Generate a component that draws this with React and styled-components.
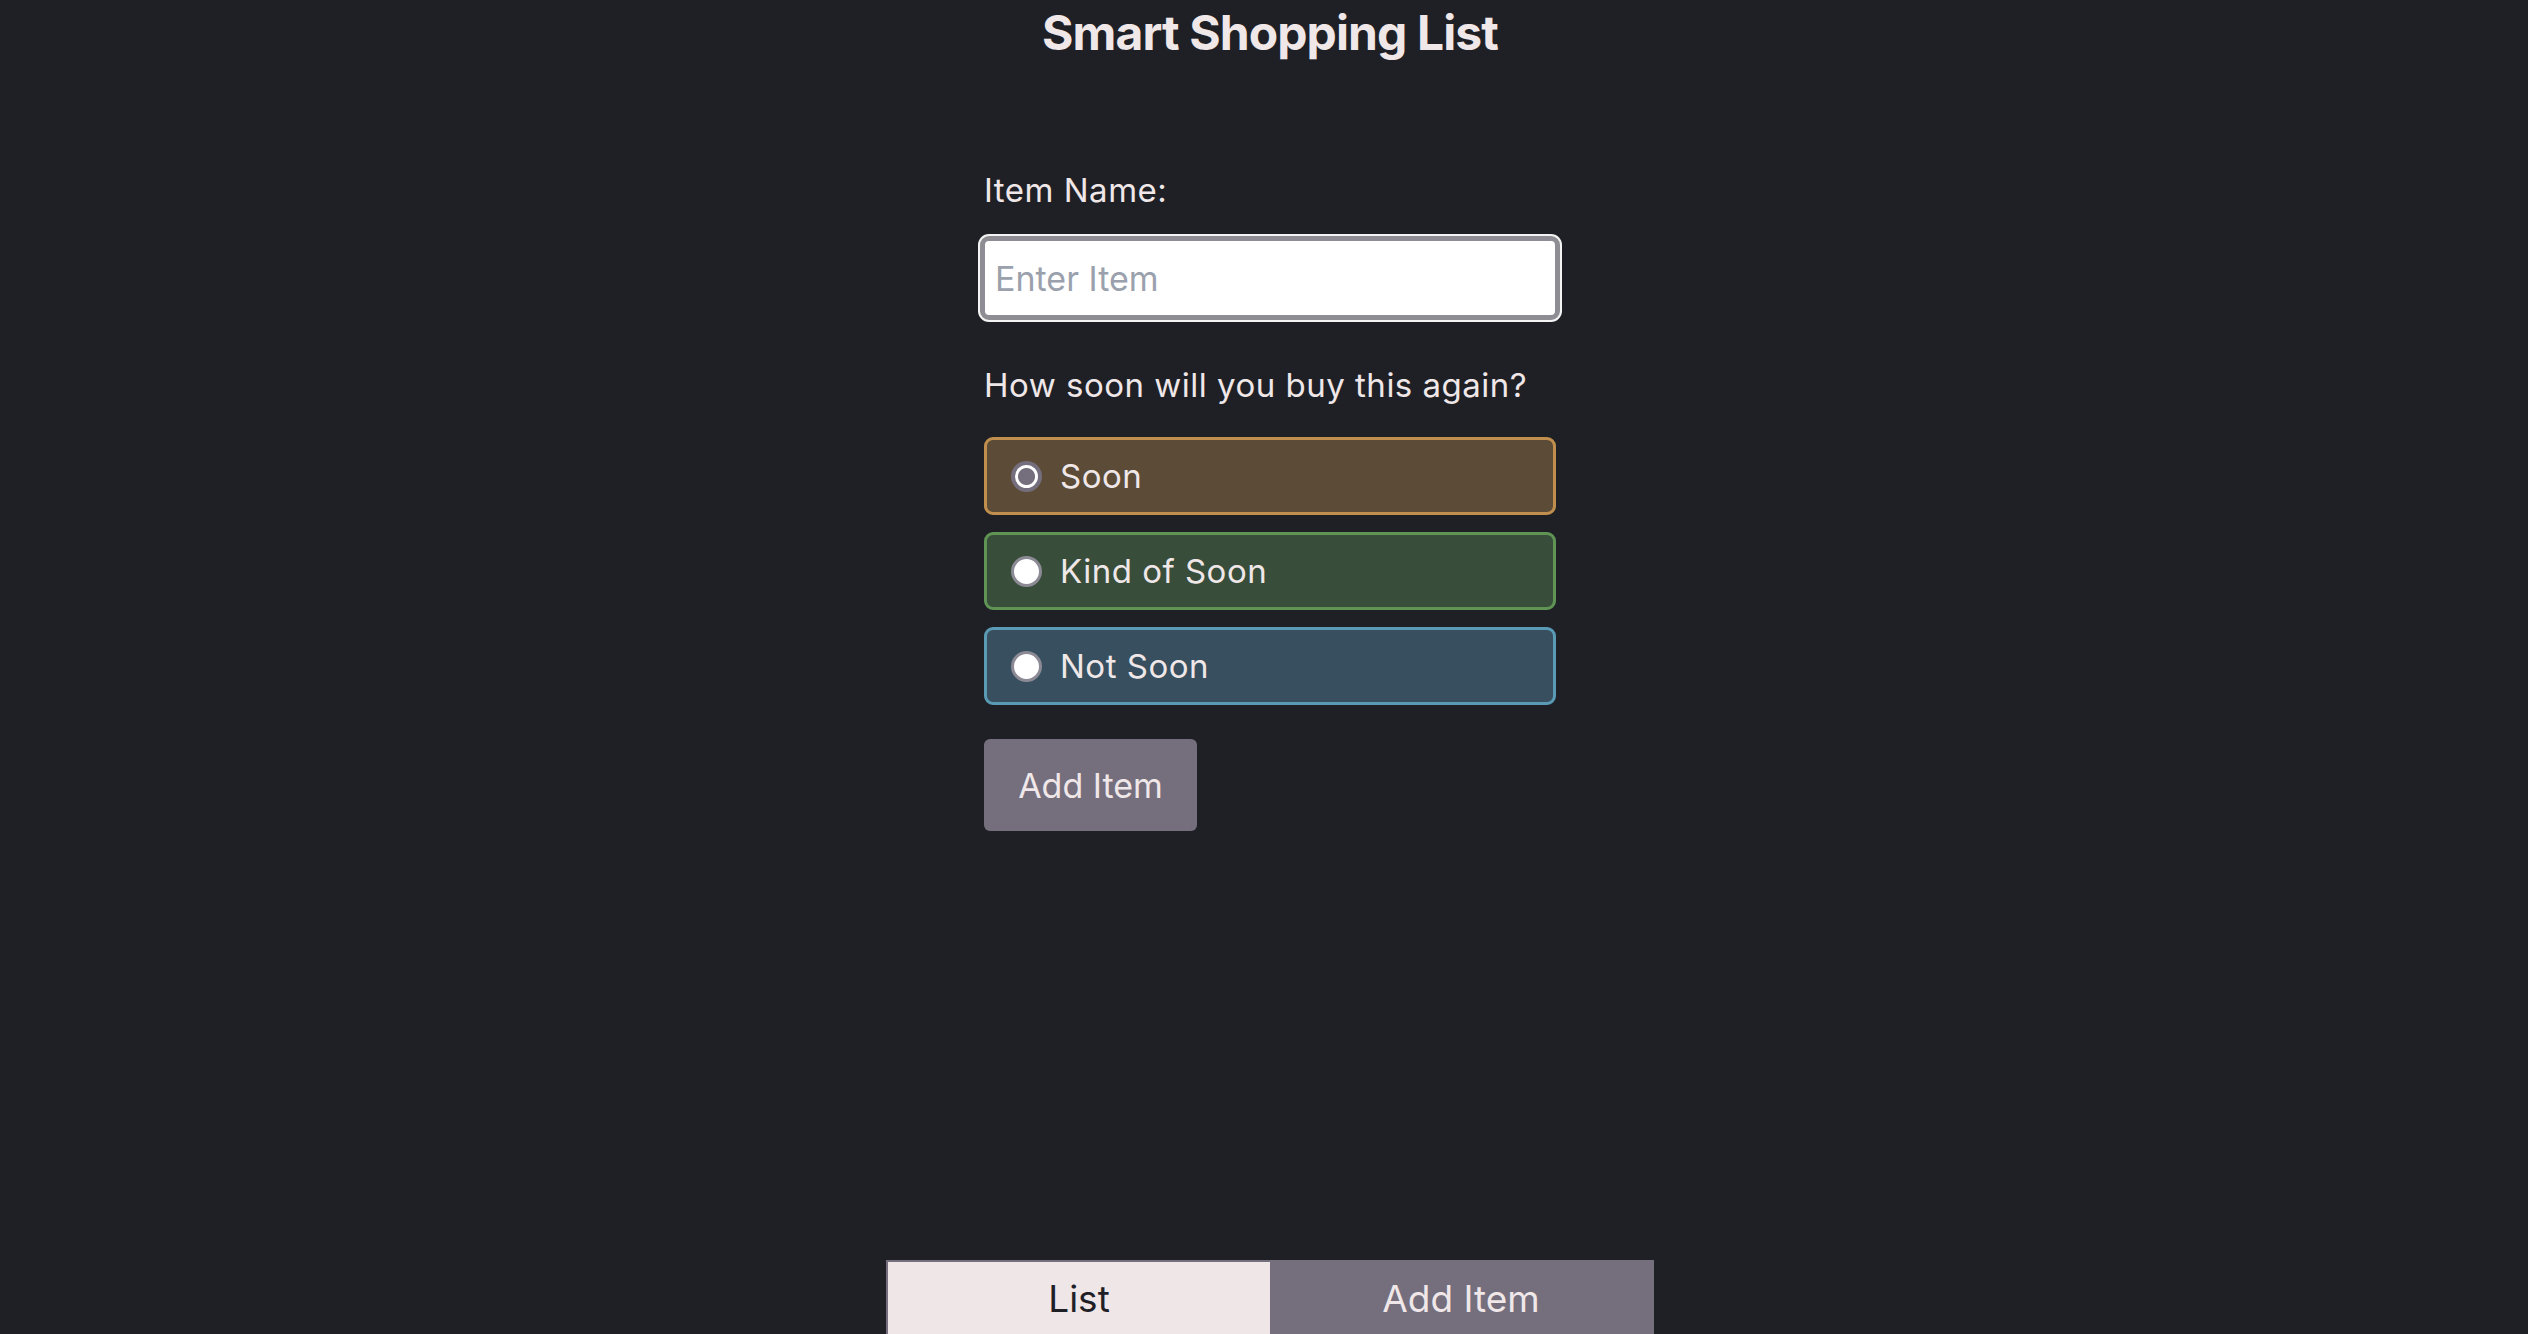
import React, { useState } from "react";
import styled, { createGlobalStyle } from "styled-components";

const colors = {
  bg: "#1f2026",
  text: "#efe7e8",
  gray: "#746e7d",
  light: "#efe6e7",
};

const GlobalStyle = createGlobalStyle`
  html, body {
    margin: 0;
    padding: 0;
    background: ${colors.bg};
  }
  body {
    font-family: Inter, "Noto Sans", "Liberation Sans", sans-serif;
    color: ${colors.text};
  }
  * {
    box-sizing: border-box;
  }
`;

const urgency = {
  soon: { border: "#c08f4e", fill: "#5c4b37" },
  kind: { border: "#5f9455", fill: "#384d3a" },
  not: { border: "#5a9ab5", fill: "#374f5e" },
};

const options = [
  { id: "soon", label: "Soon" },
  { id: "kind", label: "Kind of Soon" },
  { id: "not", label: "Not Soon" },
];

const App = () => {
  const [choice, setChoice] = useState("soon");
  const [item, setItem] = useState("");

  return (
    <>
      <GlobalStyle />
      <Page>
        <Title>Smart Shopping List</Title>
        <Form onSubmit={(e) => e.preventDefault()}>
          <Label htmlFor="itemName">Item Name:</Label>
          <TextInput
            id="itemName"
            placeholder="Enter Item"
            value={item}
            onChange={(e) => setItem(e.target.value)}
            autoFocus
          />
          <Question>How soon will you buy this again?</Question>
          <Options>
            {options.map((opt) => (
              <Option key={opt.id} tone={opt.id}>
                <Radio
                  type="radio"
                  name="frequency"
                  checked={choice === opt.id}
                  onChange={() => setChoice(opt.id)}
                />
                {opt.label}
              </Option>
            ))}
          </Options>
          <SubmitButton type="submit">Add Item</SubmitButton>
        </Form>
        <Nav>
          <NavTab active>List</NavTab>
          <NavTab>Add Item</NavTab>
        </Nav>
      </Page>
    </>
  );
};

export default App;

const Page = styled.div`
  display: flex;
  flex-direction: column;
  align-items: center;
  min-height: 100vh;
  padding-left: 12px;
`;

const Title = styled.h1`
  margin: 0;
  padding-top: 3px;
  font-size: 48px;
  line-height: 59px;
  font-weight: 700;
  letter-spacing: -0.9px;
  color: ${colors.text};
`;

const Form = styled.form`
  display: flex;
  flex-direction: column;
  width: 572px;
  margin-top: 109px;
`;

const Label = styled.label`
  font-size: 33px;
  letter-spacing: 0.5px;
  line-height: 39px;
  margin-bottom: 26px;
`;

const TextInput = styled.input`
  width: 580px;
  height: 84px;
  margin: 0 -4px;
  padding: 0 10px;
  border: 5px solid #8e8d93;
  border-radius: 9px;
  background: #fff;
  font-family: Inter, "Noto Sans", sans-serif;
  font-size: 34px;
  color: #1f2026;
  caret-color: #111;
  box-shadow: 0 0 0 2px #f4f4f4;
  outline: none;
  &::placeholder {
    color: #9aa1ad;
  }
`;

const Question = styled.p`
  margin: 46px 0 32px;
  font-size: 33px;
  letter-spacing: 0.5px;
  line-height: 39px;
`;

const Options = styled.div`
  display: flex;
  flex-direction: column;
  gap: 17px;
`;

const Option = styled.label`
  display: flex;
  align-items: center;
  gap: 18px;
  height: 78px;
  padding-left: 24px;
  border: 3px solid ${(p) => urgency[p.tone].border};
  border-radius: 9px;
  background: ${(p) => urgency[p.tone].fill};
  font-size: 33px;
  letter-spacing: 0.5px;
  color: ${colors.text};
  cursor: pointer;
`;

const Radio = styled.input`
  appearance: none;
  margin: 0;
  width: 31px;
  height: 31px;
  border-radius: 50%;
  border: 3px solid #8c8a94;
  background: #fff;
  cursor: pointer;
  &:checked {
    border: 4px solid ${colors.gray};
    background: radial-gradient(circle, ${colors.gray} 0 8px, #fff 9px);
  }
`;

const SubmitButton = styled.button`
  align-self: flex-start;
  margin-top: 34px;
  width: 213px;
  height: 92px;
  border: none;
  border-radius: 6px;
  background: ${colors.gray};
  color: ${colors.text};
  font-family: Inter, "Noto Sans", sans-serif;
  font-size: 34px;
  cursor: pointer;
`;

const Nav = styled.nav`
  display: grid;
  grid-template-columns: 1fr 1fr;
  width: 768px;
  height: 74px;
  margin-top: auto;
  border: 2px solid ${colors.gray};
  border-bottom: none;
`;

const NavTab = styled.a`
  display: flex;
  align-items: center;
  justify-content: center;
  font-size: 37px;
  background: ${(p) => (p.active ? colors.light : colors.gray)};
  color: ${(p) => (p.active ? colors.bg : colors.text)};
  cursor: pointer;
`;
